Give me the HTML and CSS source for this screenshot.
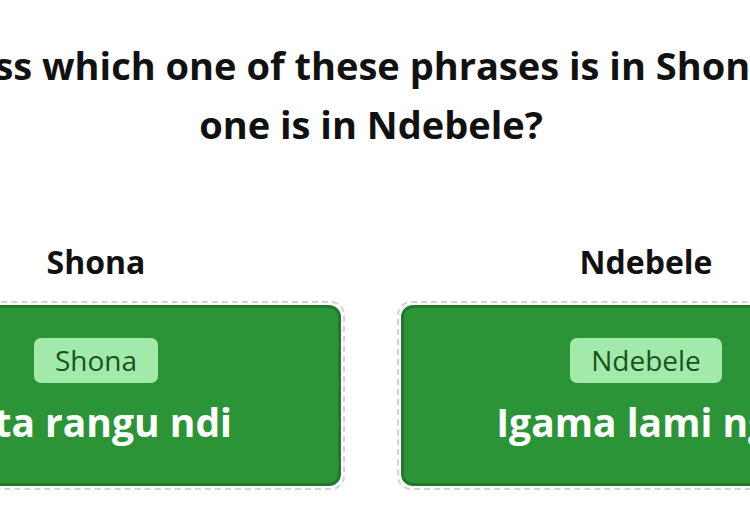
FILE: index.html
```html
<!DOCTYPE html>
<html lang="en">
<head>
    <meta charset="UTF-8">
    <meta name="viewport" content="width=device-width, initial-scale=1.0">
    <title>Shona or Ndebele?</title>
    <link rel="stylesheet" href="styles.css">
</head>
<body>
    <div class="page">
        <h1 class="question">Can you guess which one of these phrases is in Shona and which<br>one is in Ndebele?</h1>

        <div class="columns">
            <div class="column">
                <h2>Shona</h2>
                <div class="drop-zone">
                    <div class="phrase-card">
                        <span class="tag">Shona</span>
                        <p class="phrase">Zita rangu ndi</p>
                    </div>
                </div>
            </div>
            <div class="column">
                <h2>Ndebele</h2>
                <div class="drop-zone">
                    <div class="phrase-card">
                        <span class="tag">Ndebele</span>
                        <p class="phrase">Igama lami ngu</p>
                    </div>
                </div>
            </div>
        </div>
    </div>
</body>
</html>
```

FILE: styles.css
```css
/* Page setup */
body {
    margin: 0;
    overflow: hidden;
    background: #ffffff;
    font-family: 'Open Sans', 'Noto Sans', sans-serif;
    color: #111111;
}

/* Wide content, wider than the window */
.page {
    width: 1600px;
    margin-left: -429px;
}

/* Question heading */
.question {
    margin: 36px 0 0;
    font-size: 38px;
    line-height: 59px;
    font-weight: 700;
    text-align: center;
    white-space: nowrap;
}

/* Two answer columns */
.columns {
    display: grid;
    grid-template-columns: 498px 498px;
    column-gap: 52px;
    justify-content: center;
    margin-top: 90px;
}

.column h2 {
    margin: 0 0 21px;
    font-size: 32px;
    line-height: 36px;
    font-weight: 700;
    text-align: center;
}

/* Dashed drop area around each card */
.drop-zone {
    border: 2px dashed #d2d2d9;
    border-radius: 14px;
    padding: 2px;
}

/* Green phrase card */
.phrase-card {
    background-color: #2a9436;
    border: 3px solid #22782b;
    border-radius: 12px;
    padding: 30px 20px 36px;
    display: flex;
    flex-direction: column;
    align-items: center;
    gap: 14px;
}

.tag {
    background-color: #a2eaa9;
    color: #1a5220;
    border-radius: 7px;
    font-size: 28px;
    line-height: 45px;
    padding: 0 21px;
}

.phrase {
    margin: 0;
    color: #ffffff;
    font-size: 39px;
    line-height: 50px;
    font-weight: 700;
}
```
